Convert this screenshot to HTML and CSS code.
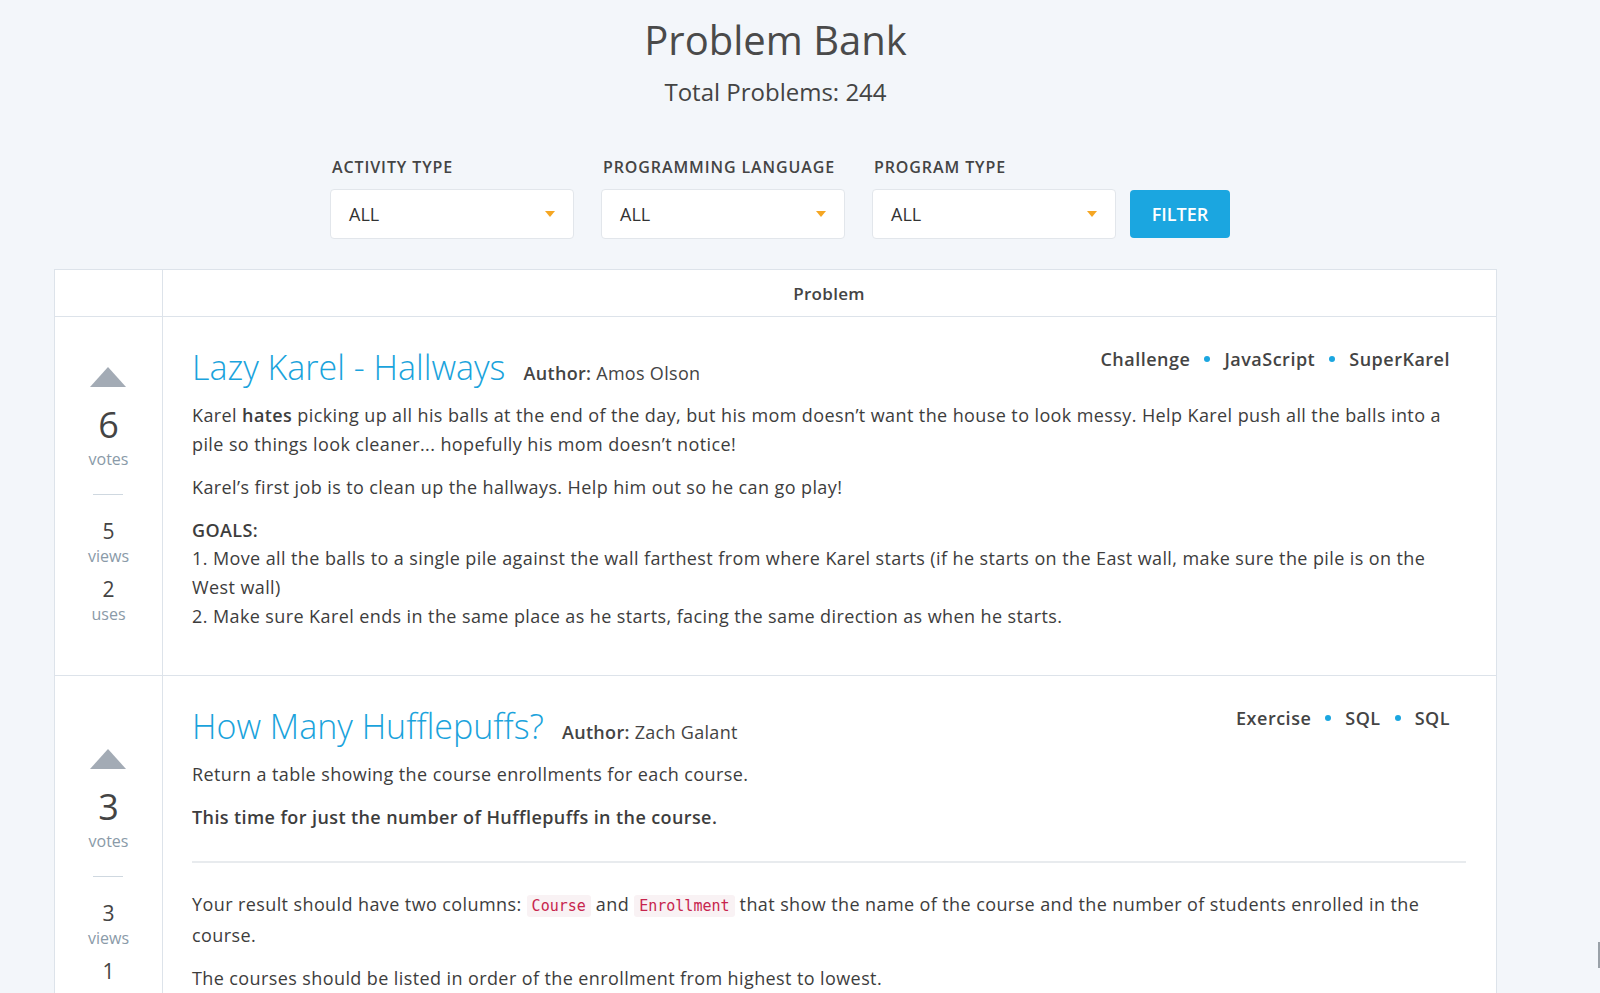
FILE: index.html
```html
<!DOCTYPE html>
<html lang="en">
<head>
    <meta charset="UTF-8">
    <meta name="viewport" content="width=device-width, initial-scale=1.0">
    <title>Problem Bank</title>
    <link rel="stylesheet" href="styles.css">
</head>
<body>
    <div class="page">
        <div class="page-header">
            <h1>Problem Bank</h1>
            <p class="total">Total Problems: 244</p>
        </div>

        <form class="filters">
            <div class="filter-group">
                <label>Activity Type</label>
                <div class="select">ALL <span class="caret"></span></div>
            </div>
            <div class="filter-group">
                <label>Programming Language</label>
                <div class="select">ALL <span class="caret"></span></div>
            </div>
            <div class="filter-group">
                <label>Program Type</label>
                <div class="select">ALL <span class="caret"></span></div>
            </div>
            <button type="button" class="filter-btn">Filter</button>
        </form>

        <div class="problem-table">
            <div class="table-head">
                <div class="vote-col"></div>
                <div class="problem-col">Problem</div>
            </div>

            <div class="problem-row">
                <div class="vote-col">
                    <div class="stats">
                        <span class="upvote"></span>
                        <div class="count">6</div>
                        <div class="count-label">votes</div>
                        <div class="stat-rule"></div>
                        <div class="stat">5</div>
                        <div class="count-label">views</div>
                        <div class="stat">2</div>
                        <div class="count-label">uses</div>
                    </div>
                </div>
                <div class="problem-col">
                    <div class="tags">
                        <span>Challenge</span><i class="dot"></i><span>JavaScript</span><i class="dot"></i><span>SuperKarel</span>
                    </div>
                    <div class="problem-title">
                        <a href="#">Lazy Karel - Hallways</a>
                        <span class="author"><b>Author:</b> Amos Olson</span>
                    </div>
                    <div class="description">
                        <p>Karel <b>hates</b> picking up all his balls at the end of the day, but his mom doesn’t want the house to look messy. Help Karel push all the balls into a pile so things look cleaner... hopefully his mom doesn’t notice!</p>
                        <p>Karel’s first job is to clean up the hallways. Help him out so he can go play!</p>
                        <p><b>GOALS:</b><br>
                        1. Move all the balls to a single pile against the wall farthest from where Karel starts (if he starts on the East wall, make sure the pile is on the West wall)<br>
                        2. Make sure Karel ends in the same place as he starts, facing the same direction as when he starts.</p>
                    </div>
                </div>
            </div>

            <div class="problem-row tall">
                <div class="vote-col">
                    <div class="stats">
                        <span class="upvote"></span>
                        <div class="count">3</div>
                        <div class="count-label">votes</div>
                        <div class="stat-rule"></div>
                        <div class="stat">3</div>
                        <div class="count-label">views</div>
                        <div class="stat">1</div>
                        <div class="count-label">uses</div>
                    </div>
                </div>
                <div class="problem-col">
                    <div class="tags">
                        <span>Exercise</span><i class="dot"></i><span>SQL</span><i class="dot"></i><span>SQL</span>
                    </div>
                    <div class="problem-title">
                        <a href="#">How Many Hufflepuffs?</a>
                        <span class="author"><b>Author:</b> Zach Galant</span>
                    </div>
                    <div class="description">
                        <p>Return a table showing the course enrollments for each course.</p>
                        <p><b>This time for just the number of Hufflepuffs in the course.</b></p>
                        <hr>
                        <p>Your result should have two columns: <code>Course</code> and <code>Enrollment</code> that show the name of the course and the number of students enrolled in the course.</p>
                        <p>The courses should be listed in order of the enrollment from highest to lowest.</p>
                    </div>
                </div>
            </div>
        </div>
    </div>
    <div class="side-tab"></div>
</body>
</html>
```

FILE: styles.css
```css
body {
    font-family: "Open Sans", Lato, sans-serif;
    background-color: #f3f6fa;
    color: #3d3d3d;
    margin: 0;
    padding: 0;
}
.page {
    width: 1443px;
    margin-left: 54px;
}
.page-header {
    text-align: center;
    padding-top: 14px;
}
h1 {
    font-size: 40px;
    font-weight: 400;
    color: #4a4a4a;
    margin: 0;
    line-height: 52px;
}
.total {
    font-size: 24px;
    color: #444;
    margin: 11px 0 0;
    line-height: 30px;
}
.filters {
    display: flex;
    align-items: flex-end;
    gap: 27px;
    margin: 50px 0 0 276px;
}
.filter-group label {
    display: block;
    font-size: 16px;
    line-height: 20px;
    font-weight: 600;
    text-transform: uppercase;
    letter-spacing: 0.9px;
    color: #444;
    margin: 0 0 12px 2px;
}
.select {
    width: 244px;
    height: 50px;
    box-sizing: border-box;
    background-color: white;
    border: 1px solid #e2e6eb;
    border-radius: 4px;
    display: flex;
    align-items: center;
    justify-content: space-between;
    padding: 0 18px 0 18px;
    font-size: 18px;
    color: #333;
}
.caret {
    width: 0;
    height: 0;
    border-left: 5px solid transparent;
    border-right: 5px solid transparent;
    border-top: 6px solid #f5a623;
}
.filter-btn {
    margin-left: -13px;
    width: 100px;
    height: 48px;
    margin-bottom: 1px;
    background-color: #1ba6e0;
    color: white;
    border: none;
    border-radius: 4px;
    font-family: inherit;
    font-size: 18px;
    font-weight: 600;
    text-transform: uppercase;
    cursor: pointer;
}
.problem-table {
    margin-top: 30px;
    background-color: white;
    border: 1px solid #dde3ea;
    border-bottom: none;
}
.table-head, .problem-row {
    display: flex;
}
.table-head {
    height: 46px;
    border-bottom: 1px solid #dde3ea;
}
.table-head .problem-col {
    display: flex;
    align-items: center;
    justify-content: center;
    font-size: 17px;
    font-weight: 600;
    letter-spacing: 0.3px;
    color: #444;
}
.vote-col {
    width: 107px;
    flex-shrink: 0;
    border-right: 1px solid #dde3ea;
    display: flex;
    align-items: center;
    justify-content: center;
}
.problem-col {
    flex: 1;
    padding: 0 30px 0 29px;
}
.problem-row {
    border-bottom: 1px solid #dde3ea;
}
.problem-row.tall {
    min-height: 403px;
}
.problem-row .problem-col {
    padding-top: 28px;
    padding-bottom: 30px;
}
.stats {
    text-align: center;
    display: flex;
    flex-direction: column;
    align-items: center;
}
.upvote {
    width: 0;
    height: 0;
    border-left: 18px solid transparent;
    border-right: 18px solid transparent;
    border-bottom: 20px solid #a3abb5;
    margin-bottom: 16px;
}
.count {
    font-size: 36px;
    line-height: 44px;
    color: #444;
    margin-bottom: 2px;
}
.count-label {
    font-size: 16px;
    line-height: 20px;
    color: #8a9aa8;
}
.stat-rule {
    width: 30px;
    height: 1px;
    background-color: #cfd8e0;
    margin: 25px 0 13px;
}
.stat {
    font-size: 21px;
    line-height: 26px;
    color: #444;
    margin: 10px 0 2px;
}
.tags {
    float: right;
    display: flex;
    align-items: center;
    padding-top: 2px;
    margin-right: 16px;
    font-size: 18px;
    font-weight: 600;
    letter-spacing: 0.5px;
    color: #444;
}
.dot {
    width: 6px;
    height: 6px;
    border-radius: 50%;
    background-color: #1ba6e0;
    margin: 0 14px;
}
.problem-title {
    line-height: 44px;
}
.problem-title a {
    font-size: 34px;
    font-weight: 300;
    color: #1aa3dc;
    text-decoration: none;
}
.author {
    font-size: 18px;
    letter-spacing: 0.3px;
    margin-left: 14px;
    color: #444;
}
.author b {
    font-weight: 600;
}
.description {
    margin-top: 5px;
    padding-right: 12px;
    font-size: 18px;
    line-height: 28.6px;
    letter-spacing: 0.4px;
}
.description b {
    font-weight: 600;
}
.description p {
    margin: 0 0 14.5px;
}
.description hr {
    border: none;
    height: 2px;
    background-color: #e8ebee;
    margin: 30px -12px 27px 0;
}
code {
    font-family: "DejaVu Sans Mono", "Liberation Mono", monospace;
    font-size: 15px;
    letter-spacing: 0;
    color: #c7254e;
    background-color: #f9f2f4;
    padding: 2px 5px;
    border-radius: 3px;
}
.side-tab {
    position: fixed;
    right: 0;
    top: 942px;
    width: 2px;
    height: 26px;
    background-color: #9aa1a8;
}
```
